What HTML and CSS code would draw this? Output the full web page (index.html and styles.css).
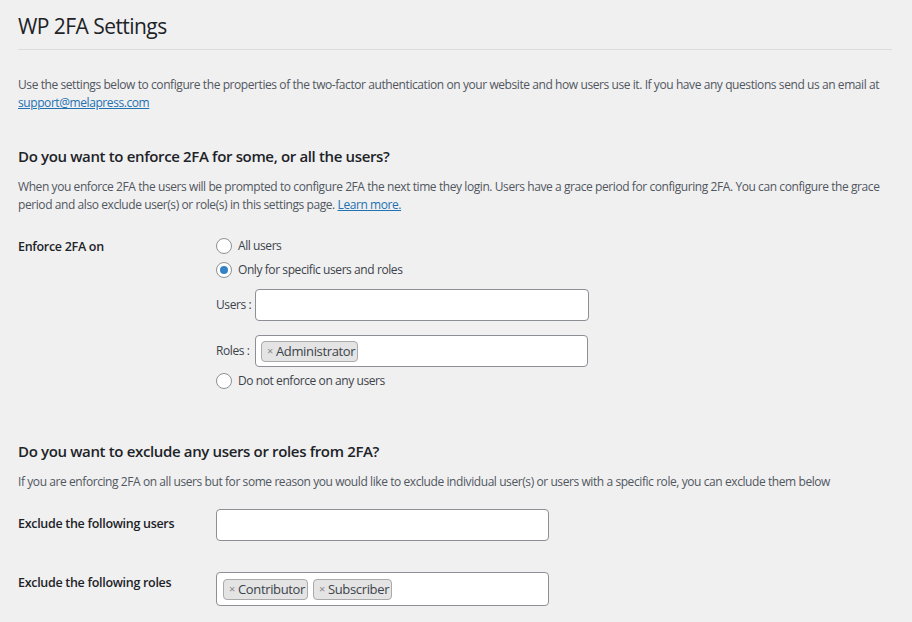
FILE: index.html
```html
<!DOCTYPE html>
<html lang="en">
<head>
<meta charset="utf-8">
<title>WP 2FA Settings</title>
<link rel="stylesheet" href="styles.css">
</head>
<body>
<div class="wrap">
  <h1 class="page-title">WP 2FA Settings</h1>
  <hr class="divider">
  <p class="intro">Use the settings below to configure the properties of the two-factor authentication on your website and how users use it. If you have any questions send us an email at <a href="#">support@melapress.com</a></p>

  <h2 class="section-title first">Do you want to enforce 2FA for some, or all the users?</h2>
  <p class="desc">When you enforce 2FA the users will be prompted to configure 2FA the next time they login. Users have a grace period for configuring 2FA. You can configure the grace period and also exclude user(s) or role(s) in this settings page. <a href="#">Learn more.</a></p>

  <div class="form-row enforce">
    <div class="row-label">Enforce 2FA on</div>
    <div class="row-field">
      <label class="radio"><span class="radio-dot"></span>All users</label>
      <label class="radio"><span class="radio-dot checked"></span>Only for specific users and roles</label>
      <div class="sub-field users-field">
        <span class="sub-label">Users :</span>
        <div class="text-box"></div>
      </div>
      <div class="sub-field roles-field">
        <span class="sub-label">Roles :</span>
        <div class="text-box tags"><span class="tag"><span class="tag-x">×</span>Administrator</span></div>
      </div>
      <label class="radio last"><span class="radio-dot"></span>Do not enforce on any users</label>
    </div>
  </div>

  <h2 class="section-title second">Do you want to exclude any users or roles from 2FA?</h2>
  <p class="desc">If you are enforcing 2FA on all users but for some reason you would like to exclude individual user(s) or users with a specific role, you can exclude them below</p>

  <div class="form-row exclude-users">
    <div class="row-label">Exclude the following users</div>
    <div class="row-field"><div class="text-box wide"></div></div>
  </div>
  <div class="form-row exclude-roles">
    <div class="row-label">Exclude the following roles</div>
    <div class="row-field"><div class="text-box wide tags"><span class="tag"><span class="tag-x">×</span>Contributor</span><span class="tag"><span class="tag-x">×</span>Subscriber</span></div></div>
  </div>
</div>
</body>
</html>
```

FILE: styles.css
```css
html, body {
  margin: 0;
  padding: 0;
  background: #f0f0f1;
}
body {
  font-family: "Open Sans", "Noto Sans", sans-serif;
  font-size: 12px;
  letter-spacing: -0.42px;
  line-height: 18px;
  color: #3c434a;
}
.wrap {
  padding: 0 20px 0 18px;
}
.page-title {
  margin: 0;
  padding: 12px 0 8px;
  font-size: 21px;
  letter-spacing: -0.55px;
  font-weight: 400;
  line-height: 29px;
  color: #1d2327;
}
.divider {
  margin: 0;
  border: 0;
  border-top: 1px solid #dcdcde;
  height: 0;
}
.intro, .desc {
  margin: 0;
  color: #50575e;
}
.intro {
  margin-top: 26px;
}
a {
  color: #2271b1;
  text-decoration: underline;
}
.section-title {
  margin: 0;
  font-size: 15px;
  font-weight: 600;
  letter-spacing: -0.35px;
  line-height: 22px;
  color: #1d2327;
}
.section-title.first { margin-top: 33px; }
.section-title.second { margin-top: 51px; }
.desc { margin-top: 11px; }

.form-row {
  display: grid;
  grid-template-columns: 198px 1fr;
}
.row-label {
  font-size: 12.5px;
  font-weight: 600;
  letter-spacing: -0.3px;
  color: #1d2327;
}
.enforce { margin-top: 24px; }
.radio {
  display: flex;
  align-items: center;
  height: 16px;
  margin-bottom: 8px;
  color: #3c434a;
}
.radio.last { margin-bottom: 0; margin-top: 6px; }
.radio-dot {
  box-sizing: border-box;
  width: 16px;
  height: 16px;
  border: 1px solid #8c8f94;
  border-radius: 50%;
  background: #fff;
  margin-right: 6px;
  position: relative;
  flex: none;
}
.radio-dot.checked::after {
  content: "";
  position: absolute;
  left: 3px;
  top: 3px;
  width: 8px;
  height: 8px;
  border-radius: 50%;
  background: #3582c4;
}
.sub-field {
  display: flex;
  align-items: center;
  gap: 3px;
}
.users-field { margin-top: 11px; }
.roles-field { margin-top: 14px; }
.sub-label {
  width: 36px;
  white-space: nowrap;
  color: #3c434a;
}
.text-box {
  box-sizing: border-box;
  width: 334px;
  height: 32px;
  border: 1px solid #8c8f94;
  border-radius: 4px;
  background: #fff;
}
.roles-field .text-box { width: 333px; }
.text-box.wide { width: 333px; }
.text-box.tags {
  display: flex;
  align-items: center;
  gap: 5px;
  padding-left: 5px;
}
.exclude-roles .text-box.tags { padding-left: 6px; }
.tag {
  box-sizing: border-box;
  display: inline-flex;
  align-items: center;
  height: 21px;
  padding: 0 2px 0 5px;
  background: #e4e4e4;
  border: 1px solid #aaa;
  border-radius: 4px;
  color: #3c434a;
  font-size: 13px;
  letter-spacing: -0.35px;
}
.tag-x {
  color: #888;
  font-size: 11px;
  margin-right: 3px;
}
.exclude-users { margin-top: 18px; align-items: center; }
.exclude-roles { margin-top: 31px; align-items: start; }
.exclude-roles .row-label { padding-top: 2px; }
.exclude-users .row-label { margin-top: -2px; }
.exclude-roles .text-box { height: 34px; }
```
